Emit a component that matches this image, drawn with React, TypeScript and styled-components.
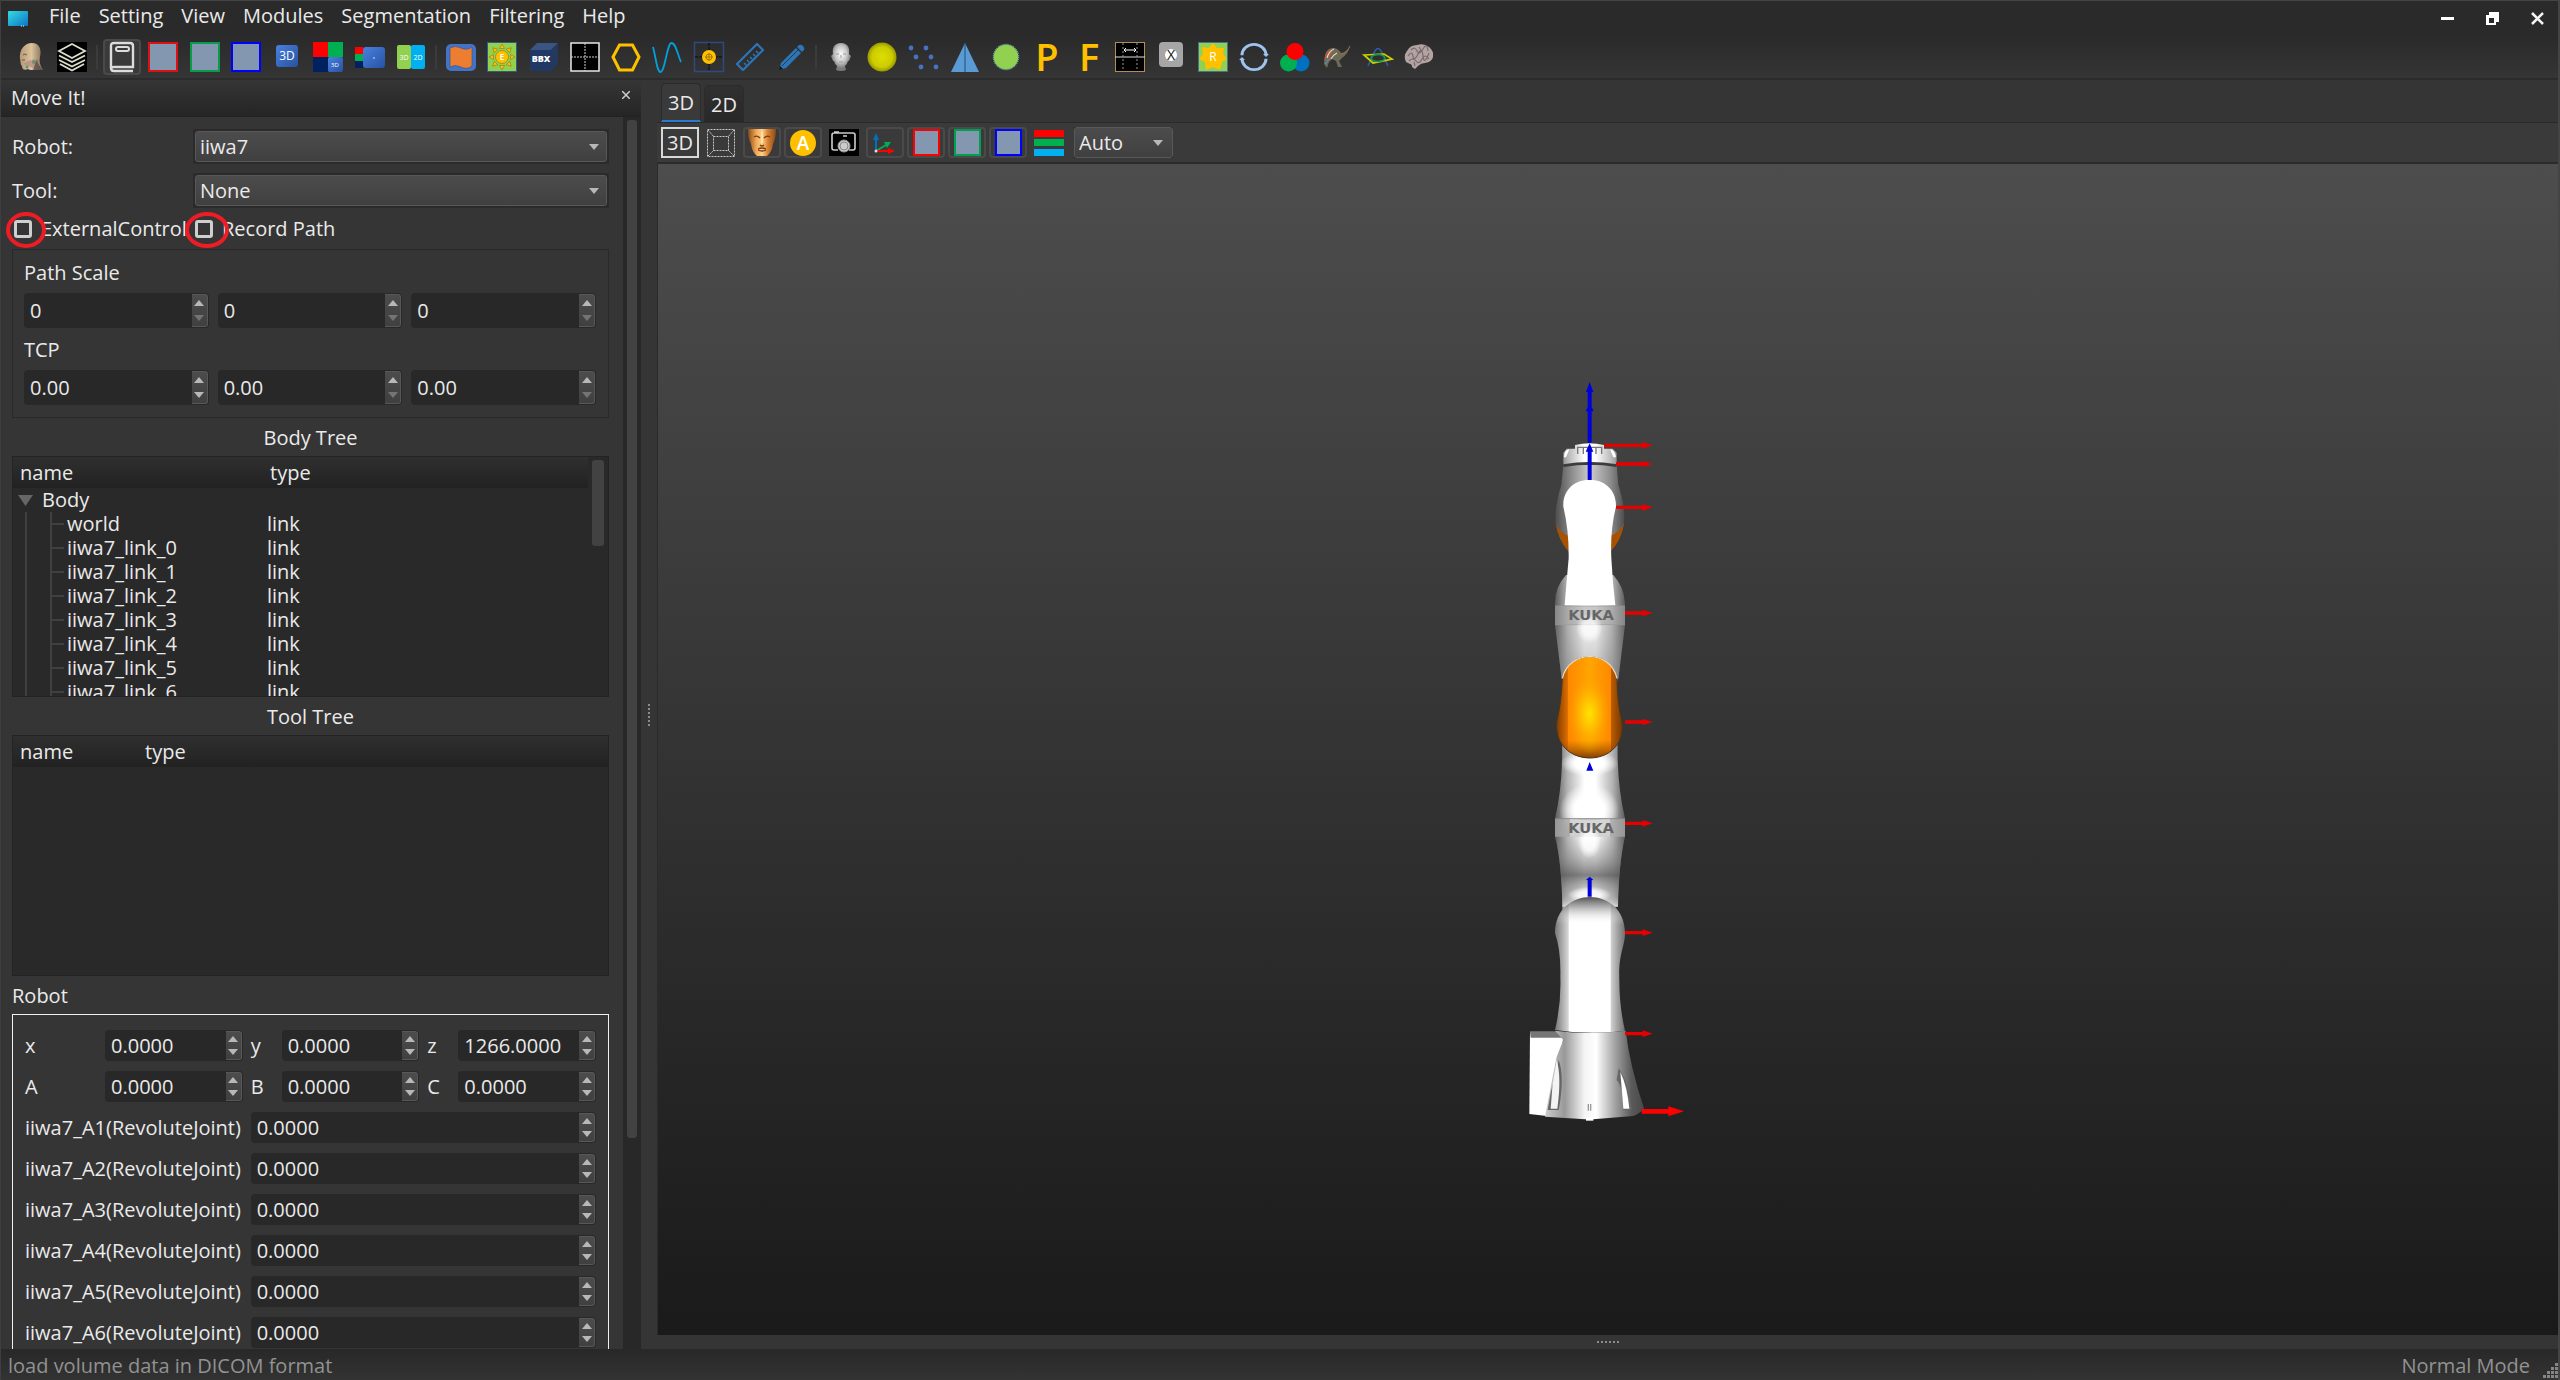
import React from 'react';
import styled, { createGlobalStyle, css } from 'styled-components';

const FONT = '"Open Sans", "Noto Sans", sans-serif';

const GlobalStyle = createGlobalStyle`
  *, *::before, *::after { box-sizing: border-box; }
  html, body { margin: 0; background: #353535; }
  body, button, input, select, table {
    font-family: ${FONT};
    font-size: 20px;
    line-height: 24px;
    color: #eaeaea;
  }
  button, input, select { margin: 0; padding: 0; border: 0; background: none; outline: none; }
`;

/* ---------- window shell ---------- */

const Window = styled.div`
  height: 100vh;
  display: flex;
  flex-direction: column;
  overflow: hidden;
  background: #353535;
  border-right: 2px solid #444;
  border-left: 1px solid #3e3e3e;
`;

const MenuBar = styled.header`
  height: 36px;
  flex: none;
  display: flex;
  align-items: stretch;
  padding-left: 6px;
  border-top: 1px solid #444;
  background: #2a2a2a;
`;

const AppIcon = styled.svg`
  width: 22px;
  height: 36px;
  margin-right: 11px;
`;

const MenuItem = styled.button`
  padding: 0 9px 6px;
`;

const WindowButtons = styled.div`
  display: flex;
  gap: 4px;
  margin-left: auto;
`;

const WindowButton = styled.button`
  width: 41px;
  display: grid;
  place-items: center;
`;

const ToolBar = styled.div`
  height: 44px;
  flex: none;
  display: flex;
  align-items: center;
  background: linear-gradient(#2a2a2a, #353535);
  border-bottom: 2px solid #2b2b2b;
  padding-left: 11px;
`;

const ToolGroup = styled.div<{ $width: number }>`
  width: ${p => p.$width}px;
  flex: none;
  display: flex;
  justify-content: space-between;
`;

const ToolSeparator = styled.span`
  width: 12px;
  flex: none;
  height: 24px;
  display: flex;
  justify-content: center;
  &::before { content: ''; width: 2px; background: #3b3b3b; }
`;

const framed = css`
  border: 2px solid #4a4a4a;
  border-radius: 4px;
  background: #3a3a3a;
`;

const ToolButton = styled.button<{ $framed?: boolean }>`
  width: 38px;
  height: 36px;
  flex: none;
  display: grid;
  place-items: center;
  ${p => p.$framed && framed}
  svg { display: block; overflow: visible; }
`;

const Main = styled.div`
  flex: 1;
  min-height: 0;
  display: flex;
`;

const StatusBar = styled.footer`
  height: 31px;
  flex: none;
  display: flex;
  align-items: center;
  justify-content: space-between;
  padding: 2px 0 0 7px;
  color: #929292;
  background: linear-gradient(#282828, #333);
`;

const StatusMode = styled.span`
  display: flex;
  align-items: flex-end;
  gap: 13px;
`;

/* ---------- dock ---------- */

const Dock = styled.aside`
  width: 640px;
  flex: none;
  display: flex;
  flex-direction: column;
`;

const DockTitle = styled.div`
  height: 37px;
  flex: none;
  display: flex;
  align-items: center;
  justify-content: space-between;
  padding: 0 9px 0 10px;
  background: linear-gradient(#353535, #252525);
  border-bottom: 1px solid #222;
`;

const DockClose = styled.button`
  width: 12px;
  height: 14px;
  display: grid;
  place-items: start center;
`;

const DockBody = styled.div`
  flex: 1;
  min-height: 0;
  display: flex;
`;

const DockContent = styled.div`
  flex: 1;
  overflow: hidden;
  padding: 12px 14px 0 11px;
`;

const ScrollTrack = styled.div`
  width: 18px;
  flex: none;
  padding: 3px 4px;
  background: #282828;
`;

const ScrollThumb = styled.div<{ $height: string }>`
  height: ${p => p.$height};
  border-radius: 3px;
  background: #424242;
`;

const Field = styled.div`
  display: grid;
  grid-template-columns: 181px 1fr;
  align-items: center;
  margin-bottom: 9px;
`;

const SelectFrame = styled.span`
  display: block;
  position: relative;
  padding: 2px;
  background: #2b2b2b;
  svg { position: absolute; right: 10px; top: 50%; margin-top: -3px; pointer-events: none; }
`;

const Select = styled.select`
  appearance: none;
  display: block;
  width: 100%;
  height: 31px;
  padding: 0 24px 0 4px;
  border: 1px solid #585858;
  border-radius: 3px;
  background: linear-gradient(#4c4c4c, #404040);
`;

const Checks = styled.div`
  display: flex;
  height: 41px;
  margin-top: -9px;
`;

const CheckItem = styled.label<{ $width: number }>`
  width: ${p => p.$width}px;
  position: relative;
  display: flex;
  align-items: center;
  gap: 9px;
  white-space: nowrap;
  padding-left: 2px;
`;

const CheckBox = styled.input`
  appearance: none;
  width: 18px;
  height: 18px;
  flex: none;
  border: 3px solid #cfcfcf;
  border-radius: 3px;
`;

const RedRing = styled.svg`
  position: absolute;
  left: -8px;
  top: 2px;
  pointer-events: none;
`;

const GroupBox = styled.fieldset`
  margin: 0;
  padding: 1px 12px 12px 11px;
  border: 1px solid #292929;
`;

const GroupLabel = styled.div`
  padding: 10px 0 8px;
  line-height: 24px;
`;

const Triple = styled.div`
  display: grid;
  grid-template-columns: repeat(3, 1fr);
  gap: 9px;
`;

const SpinFrame = styled.span<{ $height: number }>`
  display: flex;
  min-width: 0;
  height: ${p => p.$height}px;
  padding: 1px;
  border-radius: 4px;
  background: #282828;
`;

const SpinInput = styled.input`
  appearance: textfield;
  flex: 1;
  min-width: 0;
  padding-left: 5px;
  &::-webkit-inner-spin-button, &::-webkit-outer-spin-button { appearance: none; margin: 0; }
`;

const SpinButtons = styled.span`
  width: 16px;
  display: flex;
  flex-direction: column;
  border: 1px solid #585858;
  border-left: 0;
  border-radius: 0 3px 3px 0;
  background: linear-gradient(#4c4c4c, #404040);
`;

const SpinButton = styled.button`
  flex: 1;
  display: grid;
  place-items: center;
`;

const Heading = styled.div<{ $center?: boolean }>`
  height: 38px;
  line-height: 40px;
  text-align: ${p => (p.$center ? 'center' : 'left')};
`;

const TreeBox = styled.div`
  height: 241px;
  display: flex;
  overflow: hidden;
  border: 1px solid #232323;
  background: #292929;
`;

const TreeTable = styled.table<{ $first: number }>`
  flex: 1;
  display: block;
  overflow: hidden;
  border-collapse: collapse;
  thead, tbody { display: block; }
  thead { background: linear-gradient(#2f2f2f, #222); }
  tr { display: grid; grid-template-columns: ${p => p.$first}px 1fr; }
  th { padding: 4px 0 3px 7px; font-weight: 400; text-align: left; }
  td { padding: 0 0 0 4px; height: 24px; }
  td:first-child { display: flex; padding-left: 12px; }
`;

const Guide = styled.span<{ $branch?: boolean }>`
  width: ${p => (p.$branch ? 17 : 25)}px;
  display: flex;
  align-items: center;
  border-left: 2px solid #404040;
  &::after {
    content: '';
    width: 12px;
    height: ${p => (p.$branch ? 2 : 0)}px;
    background: #404040;
  }
`;

const RootCell = styled.span`
  display: flex;
  align-items: center;
  gap: 9px;
  margin-left: -7px;
`;

const TreeScroll = styled.div`
  width: 20px;
  padding: 3px 4px;
`;

const JointFrame = styled.div`
  display: grid;
  grid-template-columns: 72px 1fr 23px 1fr 23px 1fr;
  column-gap: 8px;
  row-gap: 10px;
  align-items: center;
  padding: 15px 12px;
  border: 1px solid #f0f0f0;
`;

const AxisLabel = styled.label<{ $wide?: boolean }>`
  grid-column: span ${p => (p.$wide ? 2 : 1)};
  white-space: nowrap;
`;

const JointValue = styled.div`
  grid-column: span 4;
`;

/* ---------- view area ---------- */

const Splitter = styled.div`
  width: 16px;
  flex: none;
  display: grid;
  place-items: center;
`;

const ViewArea = styled.section`
  flex: 1;
  min-width: 0;
  display: flex;
  flex-direction: column;
`;

const Tabs = styled.nav`
  height: 43px;
  flex: none;
  display: flex;
  align-items: flex-end;
  gap: 3px;
  padding-left: 4px;
  border-bottom: 1px solid #2a2a2a;
`;

const Tab = styled.button<{ $active?: boolean }>`
  width: 40px;
  height: ${p => (p.$active ? 39 : 37)}px;
  padding-top: 2px;
  border: 1px solid #2b2b2b;
  border-bottom: ${p => (p.$active ? '2px solid #2a7bd0' : '0')};
  border-radius: 5px 5px 0 0;
  background: ${p => (p.$active ? '#3a3a3a' : 'linear-gradient(#303030, #282828)')};
`;

const ViewTools = styled.div`
  height: 41px;
  flex: none;
  display: flex;
  align-items: center;
  gap: 3px;
  padding-left: 4px;
  background: #3a3a3a;
  border-bottom: 2px solid #2b2b2b;
  ${ToolButton} { height: 31px; }
`;

const ModeButton = styled(ToolButton)`
  border: 2px solid #d8d8d8;
`;

const ModeSelect = styled.span`
  width: 99px;
  margin-left: 3px;
  ${SelectFrame} { padding: 0; }
`;

const Viewport = styled.div`
  flex: 1;
  min-height: 0;
  display: flex;
  align-items: center;
  justify-content: center;
  border-left: 1px solid #2a2a2a;
  background: linear-gradient(#4d4d4d, #1a1a1a);
`;

const BottomHandle = styled.div`
  height: 14px;
  flex: none;
  display: grid;
  place-items: center;
`;

/* ---------- small glyphs ---------- */

const Arrow = ({ up, dim, size = 10 }: { up?: boolean; dim?: boolean; size?: number }) => (
  <svg width={size} height={size * 0.6} viewBox="0 0 10 6" aria-hidden="true">
    <path d={up ? 'M0 6L5 0L10 6Z' : 'M0 0H10L5 6Z'} fill={dim ? '#747474' : '#b8b8b8'} />
  </svg>
);

const Spin = ({ label, id, value, height = 31, dimUp, dimDown }: {
  label: string; id?: string; value: string; height?: number; dimUp?: boolean; dimDown?: boolean;
}) => (
  <SpinFrame $height={height}>
    <SpinInput id={id} type="number" step="any" defaultValue={value} aria-label={label} />
    <SpinButtons>
      <SpinButton aria-label={`${label} up`}><Arrow up dim={dimUp} size={10} /></SpinButton>
      <SpinButton aria-label={`${label} down`}><Arrow dim={dimDown} size={10} /></SpinButton>
    </SpinButtons>
  </SpinFrame>
);

const Icon = ({ children }: { children: React.ReactNode }) => (
  <svg width="30" height="30" viewBox="0 0 30 30" fill="none" aria-hidden="true">{children}</svg>
);

const Label = ({ x = 15, y, size, fill = '#fff', weight = 400, children }: {
  x?: number; y: number; size: number; fill?: string; weight?: number; children: string;
}) => (
  <text x={x} y={y} fontSize={size} fill={fill} fontWeight={weight} textAnchor="middle" fontFamily={FONT}>{children}</text>
);

const Plane = ({ color }: { color: string }) => (
  <Icon><rect x="1" y="1" width="28" height="28" fill="#8497b0" stroke={color} strokeWidth="2" /></Icon>
);

const SmallPlane = ({ color }: { color: string }) => (
  <svg width="27" height="27" viewBox="0 0 27 27" aria-hidden="true">
    <rect x="1" y="1" width="25" height="25" fill="#8497b0" stroke={color} strokeWidth="2" />
  </svg>
);

const Defs = () => (
  <svg width="0" height="0" style={{ position: 'absolute' }} aria-hidden="true">
    <defs>
      <linearGradient id="blueCube" x1="0" y1="0" x2="1" y2="1">
        <stop offset="0" stopColor="#4a80dd" /><stop offset="1" stopColor="#2553a4" />
      </linearGradient>
      <linearGradient id="skin" x1="0" y1="0" x2="1" y2="0">
        <stop offset="0" stopColor="#b59a77" /><stop offset=".5" stopColor="#dcc39b" /><stop offset="1" stopColor="#7d6a55" />
      </linearGradient>
      <radialGradient id="mannequin" cx=".5" cy=".4">
        <stop offset="0" stopColor="#fff" /><stop offset=".6" stopColor="#c4c4c4" /><stop offset="1" stopColor="#7a7a7a" />
      </radialGradient>
      <radialGradient id="olive">
        <stop offset="0" stopColor="#dede00" /><stop offset=".7" stopColor="#cccc00" /><stop offset="1" stopColor="#989800" />
      </radialGradient>
      <linearGradient id="bronze" x1="0" y1="0" x2="1" y2="0">
        <stop offset="0" stopColor="#8b4913" /><stop offset=".3" stopColor="#f3a957" /><stop offset=".5" stopColor="#ffd08a" />
        <stop offset=".7" stopColor="#d98435" /><stop offset="1" stopColor="#8b4913" />
      </linearGradient>
    </defs>
  </svg>
);

const HeadIcon = () => (
  <Icon>
    <path d="M4 17C3 7 9 1 16 1C23 1 26 7 24 15C23 19 24 24 27 28H14L12 27C8 29 6 27 6 24C4 22 5 20 4 17Z" fill="url(#skin)" />
    <path d="M7 22L12 19L19 17L21 22L18 26L12 24Z" fill="#b17f83" opacity=".6" />
    <circle cx="18" cy="20" r="2" fill="#718e6b" /><circle cx="11" cy="25" r="1.4" fill="#4f9a74" />
    <path d="M7 13Q9 11 11 13M6 18L9 18" stroke="#705438" />
    <path d="M21 17Q22 24 27 28H17Z" fill="#4a433e" opacity=".7" />
  </Icon>
);
const LayersIcon = () => (
  <Icon>
    <rect width="30" height="30" fill="#000" />
    <path d="M15 3L28 10L15 17L2 10ZM2 14.500L15 21L28 14.500M2 19L15 25.500L28 19M3 23L15 29.500L27 23" stroke="#dedecc" strokeWidth="1.800" transform="translate(0 -1)" />
  </Icon>
);
const BookIcon = () => (
  <Icon>
    <path d="M26 29H7Q4 29 4 26V4Q4 1 7 1H23Q26 1 26 4V25H7Q4 25 4 27" stroke="#dcdcdc" strokeWidth="2.400" />
    <rect x="9" y="5" width="13" height="4" rx="2" stroke="#dcdcdc" strokeWidth="2" />
  </Icon>
);
const Cube3DIcon = () => (
  <Icon><rect x="4" y="3" width="22" height="22" rx="3" fill="url(#blueCube)" /><Label y={18} size={12}>3D</Label></Icon>
);
const QuadIcon = () => (
  <Icon>
    <path d="M0 0H15V15H0Z" fill="#f00" /><path d="M15 0H30V15H15Z" fill="#00b050" /><path d="M0 15H15V30H0Z" fill="#002060" />
    <rect x="15" y="15" width="15" height="15" rx="2" fill="url(#blueCube)" /><Label x={22} y={25} size={6}>3D</Label>
  </Icon>
);
const StackIcon = () => (
  <Icon>
    <path d="M0 5H8V12H0Z" fill="#f00" /><path d="M0 12H8V19H0Z" fill="#00b050" /><path d="M0 19H8V26H0Z" fill="#002060" />
    <rect x="8" y="5" width="22" height="21" rx="3" fill="url(#blueCube)" /><circle cx="19" cy="16" r="1" fill="#9db8e6" />
  </Icon>
);
const PairIcon = () => (
  <Icon>
    <rect x="1" y="3" width="14" height="24" rx="2" fill="#92d050" /><rect x="15" y="3" width="14" height="24" rx="2" fill="#00b0f0" />
    <Label x={8} y={18} size={7}>3D</Label><Label x={22} y={18} size={7}>2D</Label>
  </Icon>
);
const FlagIcon = () => (
  <Icon>
    <rect x="0" y="2" width="30" height="27" rx="5" fill="#4472c4" />
    <path d="M4 6Q9 3 15 6Q21 9 26 5V24Q21 28 15 25Q9 22 4 25Z" fill="#ed7d31" stroke="#2f528f" strokeWidth=".600" />
  </Icon>
);
const SunIcon = () => (
  <Icon>
    <rect x=".500" y=".500" width="29" height="29" fill="#92d050" stroke="#2f5b87" />
    {[0, 45, 90, 135, 180, 225, 270, 315].map(a => (
      <path key={a} d="M12.500 6.500L15 2L17.500 6.500Z" fill="#ffc000" stroke="#7f6a10" strokeWidth=".500" transform={`rotate(${a} 15 15)`} />
    ))}
    <circle cx="15" cy="15" r="6.500" fill="#ffc000" stroke="#7f6a10" strokeWidth=".500" /><Label y={18} size={8} weight={600}>E</Label>
  </Icon>
);
const BoxIcon = () => (
  <Icon>
    <path d="M1 8L8 1H29L22 8Z" fill="#3a5584" /><path d="M22 8L29 1V22L22 29Z" fill="#23395f" /><path d="M1 8H22V29H1Z" fill="#203864" />
    <Label x={12} y={20} size={9} weight={800}>BBX</Label>
  </Icon>
);
const GridIcon = () => (
  <Icon><rect x="1" y="1" width="28" height="28" fill="#000" stroke="#e8e8e8" strokeWidth="1.500" /><path d="M15 1V29M1 15H29" stroke="#d0d0d0" strokeDasharray="2 1" /></Icon>
);
const HexIcon = () => (
  <Icon><path d="M2 15L8.500 3H21.500L28 15L21.500 28H8.500Z" stroke="#ffc000" strokeWidth="3" /></Icon>
);
const WaveIcon = () => (
  <Icon><path d="M1 5C4 16 5 30 8.500 30C13 30 15 1 19.500 1C24 1 26 14 29 20" stroke="#00a0d8" strokeWidth="1.800" /></Icon>
);
const TargetIcon = () => (
  <Icon>
    <rect x=".500" y=".500" width="29" height="29" stroke="#2f4a80" strokeWidth="1.500" />
    <path d="M15 1V29M1 15H29" stroke="#151515" strokeWidth="1.500" strokeDasharray="3 1" /><circle cx="15" cy="15" r="7" fill="#ffc000" />
    <circle cx="15" cy="15" r="3" stroke="#a07800" /><path d="M15 11V19M11 15H19" stroke="#a07800" />
  </Icon>
);
const RulerIcon = () => (
  <Icon>
    <path d="M2 22L22 2L28 8L8 28Z" stroke="#2e75b6" strokeWidth="2.200" strokeLinejoin="round" />
    <path d="M9 21L11 23M12 18L14 20M15 15L17 17M18 12L20 14M21 9L23 11" stroke="#2e75b6" strokeWidth="1.500" />
  </Icon>
);
const PencilIcon = () => (
  <Icon>
    <path d="M3 28L5 21L20 6L25 11L10 26Z" fill="#2e75b6" /><path d="M21 5L23 3Q25 2 27 4Q29 6 28 8L26 10Z" fill="#2e75b6" />
    <path d="M6 24L22 8" stroke="#173d61" /><path d="M3 28L4 24L7 27Z" fill="#111" />
  </Icon>
);
const MannequinIcon = () => (
  <Icon>
    <path d="M15 1C22 1 24 6 23 12L25 14L23 19H22Q21 23 19 24L20 28Q15 30 10 28L11 24Q9 23 8 19H7L5 14L7 12C6 6 8 1 15 1Z" fill="url(#mannequin)" />
    <path d="M10 12H13M17 12H20M13 20H17M15 13V16" stroke="#999" />
  </Icon>
);
const SphereIcon = () => <Icon><circle cx="15" cy="15" r="14.500" fill="url(#olive)" /></Icon>;
const PointsIcon = () => (
  <Icon>{[[2, 6], [17, 6], [7, 15], [22, 15], [12, 25], [27, 25]].map(([x, y]) => (
    <circle key={x} cx={x} cy={y} r="2.400" fill="#4472c4" />
  ))}</Icon>
);
const PyramidIcon = () => <Icon><path d="M15 1L29 30H1Z" fill="#5b9bd5" /><path d="M15 1V30" stroke="#1f4e79" /></Icon>;
const BlobIcon = () => (
  <Icon><circle cx="15" cy="15" r="12.500" fill="#92d050" stroke="#69a8a0" strokeWidth="1.500" strokeDasharray="1 1" /></Icon>
);
const LetterIcon = ({ letter }: { letter: string }) => <Icon><Label y={29} size={38} weight={600} fill="#ffc000">{letter}</Label></Icon>;
const MeasureIcon = () => (
  <Icon>
    <rect x=".500" y=".500" width="29" height="29" fill="#000" stroke="#b08d57" />
    <path d="M0 15H30" stroke="#ddd" /><path d="M8 1V29M22 1V29" stroke="#999" strokeDasharray="2 2" />
    <path d="M9 8H21M11 6L9 8L11 10M19 6L21 8L19 10" stroke="#fff" />
  </Icon>
);
const KeyIcon = () => (
  <Icon><rect x="3" y="0" width="24" height="25" rx="4" fill="#a6a6a6" /><circle cx="15" cy="13" r="6" fill="#fff" /><Label y={18} size={14} fill="#111">X</Label></Icon>
);
const StarIcon = () => (
  <Icon>
    <rect x=".500" y=".500" width="29" height="29" fill="#92d050" stroke="#41719c" />
    <path d="M15 1L19 6L26 6L25 12L29 17L24 20L22 28L15 25L8 28L7 20L1 17L5 12L4 5L11 6Z" fill="#ffc000" />
    <Label y={19} size={12}>R</Label>
  </Icon>
);
const RingIcon = () => (
  <Icon>
    <path d="M3 13A12 12 0 0 1 27 13M27 17A12 12 0 0 1 3 17" stroke="#9dc3ee" strokeWidth="3" transform="translate(0 1.5) scale(1 .9)" />
    <path d="M24 12H30L27 15ZM0 18H6L3 15Z" fill="#9dc3ee" />
  </Icon>
);
const RgbIcon = () => (
  <Icon><circle cx="21" cy="21" r="8.500" fill="#0070c0" /><circle cx="8.500" cy="21" r="8.500" fill="#00b050" /><circle cx="15" cy="9.500" r="8.500" fill="#f00" /></Icon>
);
const DinoIcon = () => (
  <Icon>
    <path d="M3 22L4 13Q6 6 12 6Q17 6 20 11Q25 11 29 4Q27 12 21 16L18 19L21 25H17L15 19L11 17L8 20L6 26Z" fill="#6d6a58" />
    <path d="M4 19Q5 10 10 8M8 19Q8 12 12 9" stroke="#b8553a" strokeWidth="1.500" />
    <path d="M6 16Q8 9 13 7M10 17Q12 13 16 11" stroke="#d7dccb" strokeWidth="1.200" /><path d="M4 22L8 17" stroke="#4d8ca6" strokeWidth="1.500" />
    <path d="M20 12Q25 12 29 4" stroke="#a06a45" />
  </Icon>
);
const OrbitIcon = () => (
  <Icon>
    <path d="M5 24L11 11Q15 2 19 11L25 24" stroke="#2c5cae" strokeWidth="1.600" />
    <path d="M1 13L21 12L29 17L10 21Z" stroke="#d0d000" strokeWidth="1.700" /><ellipse cx="15" cy="16" rx="7" ry="3.500" stroke="#159a48" strokeWidth="1.500" />
  </Icon>
);
const BrainIcon = () => (
  <Icon>
    <path d="M2 20Q-1 14 3 9Q6 3 13 3Q20 1 25 5Q30 9 29 15Q28 20 21 21Q17 21 14 24L11 27L8 25Q8 22 6 22Z" fill="#b3a3a3" />
    <path d="M4 14Q8 8 9 14T14 12T19 14T25 11M7 8Q11 4 13 9T19 7T24 9M5 19Q9 15 12 19T18 17T25 17M15 5L17 8M10 20L11 24" stroke="#7b6a6c" strokeWidth="1.200" />
  </Icon>
);

const FrameIcon = () => (
  <svg width="28" height="28" viewBox="0 0 28 28" fill="none" stroke="#c8c8c8" strokeDasharray="2 1" aria-hidden="true">
    <rect x=".500" y=".500" width="27" height="27" /><rect x="6.500" y="7.500" width="15" height="14" /><path d="M1 1L7 8M27 1L21 8M1 27L7 21M27 27L21 21" />
  </svg>
);
const FaceIcon = () => (
  <svg width="28" height="27" viewBox="0 0 28 27" fill="none" aria-hidden="true">
    <path d="M0 0H28Q28 9 25 15Q24 23 19 27H9Q4 23 3 15Q0 9 0 0Z" fill="url(#bronze)" />
    <path d="M6 8Q9 6 12 9M16 9Q19 6 22 8M10 20Q14 18 18 20M10 21Q14 23 18 21M12 16Q14 18 16 16" stroke="#7a3d0c" strokeWidth="1.300" />
    <path d="M14 3V14" stroke="#ffe6b8" strokeWidth="1.500" />
  </svg>
);
const AutoIcon = () => (
  <svg width="26" height="26" viewBox="0 0 26 26" aria-hidden="true"><circle cx="13" cy="13" r="13" fill="#ffc000" /><Label x={13} y={20} size={19} weight={600}>A</Label></svg>
);
const CameraIcon = () => (
  <svg width="30" height="27" viewBox="0 0 30 27" fill="none" aria-hidden="true">
    <rect width="30" height="27" fill="#000" />
    <path d="M9 21H5Q3 21 3 19V6Q3 4 5 4H24Q26 4 26 6V19Q26 21 24 21H20M5 3H10M14 7H18" stroke="#ccc" strokeWidth="1.600" />
    <circle cx="15" cy="17" r="6" fill="#ccc" stroke="#999" /><circle cx="15" cy="17" r="4" stroke="#888" />
  </svg>
);
const AxesIcon = () => (
  <svg width="26" height="26" viewBox="0 0 26 26" fill="none" aria-hidden="true">
    <path d="M4 21V9" stroke="#0070c0" strokeWidth="2" /><path d="M1 10L4 3L7 10Z" fill="#0070c0" />
    <path d="M4 21L14 15" stroke="#00b050" strokeWidth="2" /><path d="M12 12L19 12L15 18Z" fill="#00b050" />
    <path d="M4 21H17" stroke="#f00" strokeWidth="2" /><path d="M16 18L23 21L16 24Z" fill="#f00" /><circle cx="4" cy="21" r="1.500" fill="#ddd" />
  </svg>
);
const StripesIcon = () => (
  <svg width="30" height="26" viewBox="0 0 30 26" aria-hidden="true">
    <path d="M0 0H30V7H0Z" fill="#f00" /><path d="M0 9H30V16H0Z" fill="#00b050" /><path d="M0 19H30V26H0Z" fill="#00b0f0" />
  </svg>
);

/* ---------- robot drawing ---------- */

const Arrows = () => (
  <g fill="#e60000">
    {[[312, 226], [348, 282], [348, 412], [375, 729], [375, 1056], [375, 1360], [375, 1688], [375, 1991]].map(([x, y]) => (
      <path key={y} d={`M${x} ${y - 5}H428V${y - 10}L458 ${y}L428 ${y + 10}V${y + 5}H${x}Z`} />
    ))}
    <path d="M425 2217H505V2209L552 2224L505 2239V2231H425Z" fill="#f00" />
  </g>
);

const COVER = 'M170 1056C158 1200 382 1200 366 1056Q352 1000 351 925C330 838 208 838 187 925Q184 1000 170 1056Z';

const Robot = () => (
  <svg width="216" height="759" viewBox="0 0 648 2277" aria-label="iiwa7 robot" role="img">
    <defs>
      <linearGradient id="metal" x1="165" x2="375" y1="0" y2="0" gradientUnits="userSpaceOnUse">
        <stop offset="0" stopColor="#5c5c5c" /><stop offset=".18" stopColor="#b4b4b4" /><stop offset=".42" stopColor="#fff" />
        <stop offset=".58" stopColor="#fff" /><stop offset=".82" stopColor="#b4b4b4" /><stop offset="1" stopColor="#5c5c5c" />
      </linearGradient>
      <linearGradient id="bright" x1="165" x2="375" y1="0" y2="0" gradientUnits="userSpaceOnUse">
        <stop offset="0" stopColor="#777" /><stop offset=".19" stopColor="#d6d6d6" /><stop offset=".2" stopColor="#fff" />
        <stop offset=".79" stopColor="#fff" /><stop offset=".8" stopColor="#d0d0d0" /><stop offset="1" stopColor="#707070" />
      </linearGradient>
      <linearGradient id="shoulder" x1="0" x2="0" y1="0" y2="1">
        <stop offset="0" stopColor="#333" stopOpacity=".85" /><stop offset=".07" stopColor="#777" stopOpacity=".6" /><stop offset=".2" stopColor="#fff" stopOpacity="0" />
      </linearGradient>
      <linearGradient id="waist" x1="0" x2="0" y1="0" y2="1">
        <stop offset="0" stopColor="#888" stopOpacity="0" /><stop offset=".3" stopColor="#777" stopOpacity=".45" />
        <stop offset=".55" stopColor="#555" stopOpacity=".75" /><stop offset=".85" stopColor="#999" stopOpacity=".3" /><stop offset="1" stopColor="#fff" stopOpacity=".6" />
      </linearGradient>
      <linearGradient id="upperShade" x1="0" x2="0" y1="0" y2="1">
        <stop offset="0" stopColor="#888" stopOpacity=".15" /><stop offset=".6" stopColor="#777" stopOpacity=".45" />
      </linearGradient>
      <linearGradient id="orangeSide" x1="168" x2="370" y1="0" y2="0" gradientUnits="userSpaceOnUse">
        <stop offset="0" stopColor="#7c3900" /><stop offset=".17" stopColor="#da6d00" /><stop offset=".18" stopColor="#ff8800" />
        <stop offset=".5" stopColor="#ffa500" /><stop offset=".81" stopColor="#ff8800" /><stop offset=".82" stopColor="#bb5d00" /><stop offset="1" stopColor="#703300" />
      </linearGradient>
      <radialGradient id="glow"><stop offset="0" stopColor="#ffe500" /><stop offset=".4" stopColor="#ffc400" stopOpacity=".8" /><stop offset="1" stopColor="#ff9800" stopOpacity="0" /></radialGradient>
      <linearGradient id="orangeBottom" x1="0" x2="0" y1="0" y2="1"><stop offset=".82" stopColor="#9a4a00" stopOpacity="0" /><stop offset="1" stopColor="#753500" stopOpacity=".9" /></linearGradient>
      <linearGradient id="wrist" x1="165" x2="375" y1="0" y2="0" gradientUnits="userSpaceOnUse">
        <stop offset="0" stopColor="#4c4c4c" /><stop offset=".25" stopColor="#909090" /><stop offset=".5" stopColor="#ccc" /><stop offset=".8" stopColor="#8a8a8a" /><stop offset="1" stopColor="#4a4a4a" />
      </linearGradient>
      <linearGradient id="base" x1="135" x2="430" y1="0" y2="0" gradientUnits="userSpaceOnUse">
        <stop offset="0" stopColor="#ccc" /><stop offset=".2" stopColor="#999" /><stop offset=".4" stopColor="#f4f4f4" />
        <stop offset=".52" stopColor="#fff" /><stop offset=".7" stopColor="#a8a8a8" /><stop offset=".88" stopColor="#5a5a5a" /><stop offset="1" stopColor="#4a4a4a" />
      </linearGradient>
      <radialGradient id="flare"><stop offset="0" stopColor="#fff" /><stop offset=".5" stopColor="#fff" /><stop offset="1" stopColor="#fff" stopOpacity="0" /></radialGradient>
    </defs>

    {/* wrist */}
    <path d="M190 285H350L355 345Q377 410 372 465Q360 515 330 545H207Q175 510 167 460Q163 410 184 345Z" fill="url(#wrist)" />
    <path d="M167 458Q175 485 207 498V545Q175 512 167 458ZM372 458Q362 485 330 498V545Q365 512 372 458Z" fill="#a85200" />
    <path d="M190 285V248L200 236H225V225Q268 214 312 225V236H338L350 248V285Q270 270 190 285Z" fill="url(#metal)" />
    <path d="M192 262Q192 240 208 238L198 262ZM348 262Q345 240 330 238L340 262Z" fill="#fff" />
    <path d="M233 252V232H250V252M245 232H295M288 252V232H305V252" fill="none" stroke="#777" strokeWidth="4" />
    <path d="M190 287Q270 273 350 287" fill="none" stroke="#3c3c3c" strokeWidth="8" />

    {/* upper arm */}
    <path d="M198 615Q165 650 165 700V765L185 925L210 1000H330L355 925L375 765V700Q372 650 340 615Z" fill="url(#metal)" />
    <path d="M165 765H375L355 925L330 1000H210L185 925Z" fill="url(#upperShade)" />
    <path d="M190 410C185 302 352 302 348 410Q330 480 334 565Q338 640 346 706H194Q200 630 206 565Q207 480 190 410Z" fill="#fff" />
    <path d="M165 708H375V764H165Z" fill="#a4a4a4" fillOpacity=".6" />
    <path d="M165 708H375M165 764H375" stroke="#999" strokeWidth="2" />
    <ellipse cx="268" cy="775" rx="40" ry="45" fill="url(#flare)" opacity=".7" />

    {/* lower arm */}
    <path d="M186 1110H353Q350 1240 375 1345V1400Q356 1480 354 1610L187 1620Q186 1480 165 1400V1345Q190 1240 186 1110Z" fill="url(#metal)" />
    <ellipse cx="268" cy="1180" rx="86" ry="40" fill="url(#flare)" /><ellipse cx="268" cy="1320" rx="90" ry="80" fill="url(#flare)" />
    <path d="M165 1345H375V1400H165Z" fill="#aaa" fillOpacity=".75" />
    <path d="M210 1345Q268 1354 330 1345V1400H210Z" fill="#eee" fillOpacity=".5" />
    <path d="M165 1400H375Q356 1480 354 1610H187Q186 1480 165 1400Z" fill="url(#waist)" />
    <path d="M165 1346H375" stroke="#777" strokeWidth="2" />
    <ellipse cx="268" cy="1415" rx="34" ry="50" fill="url(#flare)" opacity=".8" />
    <ellipse cx="268" cy="1575" rx="66" ry="25" fill="url(#flare)" opacity=".8" />

    {/* elbow cover */}
    <path d={COVER} fill="url(#orangeSide)" />
    <path d={COVER} fill="url(#orangeBottom)" stroke="#4a3520" strokeWidth="3" />
    <path d="M187 925C208 838 330 838 351 925" fill="none" stroke="#f0dcc0" strokeWidth="4" />
    <ellipse cx="268" cy="1030" rx="66" ry="120" fill="url(#glow)" />

    {/* shoulder */}
    <path d="M165 1690C165 1545 375 1545 375 1690C375 1730 355 1750 358 1830Q358 1910 375 1982Q268 1996 165 1980Q184 1900 181 1820Q183 1740 165 1690Z" fill="url(#bright)" />
    <path d="M165 1690C165 1545 375 1545 375 1690C375 1730 355 1750 358 1830Q358 1910 375 1982Q268 1996 165 1980Q184 1900 181 1820Q183 1740 165 1690Z" fill="url(#shoulder)" />

    {/* base */}
    <path d="M90 1985H170L190 2000L160 2240L88 2232Z" fill="#fff" />
    <path d="M90 1985H170L190 2003H92Z" fill="#777" />
    <path d="M165 1982Q268 1996 377 1982Q390 2090 432 2215Q425 2228 400 2238L280 2248H255L135 2240L170 2060L190 2010Z" fill="url(#base)" />
    <path d="M176 2070Q195 2120 176 2220H143L152 2170Z" fill="#666" /><path d="M170 2070Q185 2120 172 2216H152L158 2140Z" fill="#f4f4f4" />
    <path d="M356 2095Q388 2140 395 2220H370Q370 2150 350 2130Z" fill="#666" /><path d="M361 2105Q382 2150 388 2216H370Z" fill="#fff" />
    <path d="M265 2202V2222M272 2202V2222" stroke="#999" strokeWidth="4" /><path d="M258 2242H280V2252H258Z" fill="#fff" />

    <g fontFamily='"DejaVu Sans", sans-serif' fontWeight="700" fontSize="44" fill="#666" textAnchor="middle">
      <text x="273" y="750">KUKA</text><text x="273" y="1390">KUKA</text>
    </g>

    <Arrows />
    <g fill="#0000dc">
      <path d="M263 218V66H258L269 36L280 66H275V218ZM257 124L269 98L281 124ZM263 330V245H257L269 220L280 245H275V330Z" />
      <path d="M259 1202L269 1176L280 1202ZM263 1580V1530H258L269 1520L280 1530H275V1580Z" />
    </g>
  </svg>
);

/* ---------- page ---------- */

const menus = ['File', 'Setting', 'View', 'Modules', 'Segmentation', 'Filtering', 'Help'];

const toolGroups: { width: number; icons: [string, React.ReactNode][] }[] = [
  { width: 79, icons: [['Volume', <HeadIcon />], ['Layers', <LayersIcon />]] },
  {
    width: 327,
    icons: [['Book', <BookIcon />], ['Red plane', <Plane color="#d11" />], ['Green plane', <Plane color="#0a9a4c" />], ['Blue plane', <Plane color="#00f" />],
      ['3D', <Cube3DIcon />], ['Four views', <QuadIcon />], ['Stacked views', <StackIcon />], ['Side by side', <PairIcon />]],
  },
  {
    width: 368,
    icons: [['Surface', <FlagIcon />], ['Light', <SunIcon />], ['Bounding box', <BoxIcon />], ['Grid', <GridIcon />], ['Polygon', <HexIcon />],
      ['Curve', <WaveIcon />], ['Target', <TargetIcon />], ['Ruler', <RulerIcon />], ['Pencil', <PencilIcon />]],
  },
  {
    width: 616,
    icons: [['Mannequin', <MannequinIcon />], ['Sphere', <SphereIcon />], ['Points', <PointsIcon />], ['Pyramid', <PyramidIcon />], ['Blob', <BlobIcon />],
      ['P', <LetterIcon letter="P" />], ['F', <LetterIcon letter="F" />], ['Measure', <MeasureIcon />], ['X', <KeyIcon />], ['Register', <StarIcon />],
      ['Rotate', <RingIcon />], ['Colors', <RgbIcon />], ['Dinosaur', <DinoIcon />], ['Orbit', <OrbitIcon />], ['Brain', <BrainIcon />]],
  },
];

const links = ['world', ...[0, 1, 2, 3, 4, 5, 6].map(i => `iiwa7_link_${i}`)];
const pose = [['x', '0.0000'], ['y', '0.0000'], ['z', '1266.0000'], ['A', '0.0000'], ['B', '0.0000'], ['C', '0.0000']];
const joints = [1, 2, 3, 4, 5, 6].map(i => `iiwa7_A${i}(RevoluteJoint)`);

const Ring = ({ rx }: { rx: number }) => (
  <RedRing width="46" height="40" viewBox="0 0 46 40" fill="none" aria-hidden="true">
    <ellipse cx="22" cy="20" rx={rx} ry="16" stroke="#ee1c24" strokeWidth="4" />
  </RedRing>
);

const Dots = ({ vertical }: { vertical?: boolean }) => (
  <svg width={vertical ? 3 : 22} height={vertical ? 22 : 3} aria-hidden="true">
    {[0, 4, 8, 12, 16, 20].map(n => <rect key={n} x={vertical ? 0 : n} y={vertical ? n : 0} width="2" height="2" fill="#8c8c8c" />)}
  </svg>
);

export default function App() {
  return (
    <Window>
      <GlobalStyle />
      <Defs />
      <MenuBar>
        <AppIcon viewBox="0 0 22 36" aria-hidden="true">
          <defs><linearGradient id="app" x1="0" y1="0" x2="1" y2="1"><stop offset="0" stopColor="#35dbe0" /><stop offset="1" stopColor="#0d74c5" /></linearGradient></defs>
          <rect x="1" y="10" width="20" height="15" rx="1" fill="url(#app)" /><path d="M14 25H18" stroke="#eee" strokeDasharray="1 1" />
        </AppIcon>
        {menus.map(m => <MenuItem key={m}>{m}</MenuItem>)}
        <WindowButtons>
          <WindowButton aria-label="Minimize"><svg width="13" height="13"><path d="M0 6.500H13" stroke="#fff" strokeWidth="3" /></svg></WindowButton>
          <WindowButton aria-label="Restore">
            <svg width="13" height="13"><path d="M3 0H13V10H10V13H0V3H3Z" fill="#fff" /><path d="M3 6H8V11H3Z" fill="#2a2a2a" /></svg>
          </WindowButton>
          <WindowButton aria-label="Close"><svg width="13" height="13"><path d="M1 1L12 12M12 1L1 12" stroke="#f4f4f4" strokeWidth="2.500" /></svg></WindowButton>
        </WindowButtons>
      </MenuBar>

      <ToolBar>
        {toolGroups.map((g, i) => (
          <React.Fragment key={g.width}>
            {i > 0 && <ToolSeparator />}
            <ToolGroup $width={g.width}>
              {g.icons.map(([name, icon]) => <ToolButton key={name} aria-label={name} $framed={name === 'Book'}>{icon}</ToolButton>)}
            </ToolGroup>
          </React.Fragment>
        ))}
      </ToolBar>

      <Main>
        <Dock>
          <DockTitle>
            Move It!
            <DockClose aria-label="Close panel"><svg width="8" height="8"><path d="M0 0L8 8M8 0L0 8" stroke="#ccc" strokeWidth="1.500" /></svg></DockClose>
          </DockTitle>
          <DockBody>
            <DockContent>
              <Field>
                <label htmlFor="robot">Robot:</label>
                <SelectFrame><Select id="robot"><option>iiwa7</option></Select><Arrow /></SelectFrame>
              </Field>
              <Field>
                <label htmlFor="tool">Tool:</label>
                <SelectFrame><Select id="tool"><option>None</option></Select><Arrow /></SelectFrame>
              </Field>
              <Checks>
                <CheckItem $width={181}><CheckBox type="checkbox" />ExternalControl<Ring rx={18} /></CheckItem>
                <CheckItem $width={181}><CheckBox type="checkbox" />Record Path<Ring rx={20} /></CheckItem>
              </Checks>
              <GroupBox>
                <GroupLabel>Path Scale</GroupLabel>
                <Triple>{[1, 2, 3].map(n => <Spin key={n} label={`Path scale ${n}`} value="0" height={35} dimDown />)}</Triple>
                <GroupLabel>TCP</GroupLabel>
                <Triple>{[1, 2, 3].map(n => <Spin key={n} label={`TCP ${n}`} value="0.00" height={35} dimDown={n > 1} />)}</Triple>
              </GroupBox>

              <Heading $center>Body Tree</Heading>
              <TreeBox>
                <TreeTable $first={250}>
                  <thead><tr><th>name</th><th>type</th></tr></thead>
                  <tbody>
                    <tr>
                      <td><RootCell><svg width="15" height="11" aria-hidden="true"><path d="M0 0H15L7.500 11Z" fill="#666" /></svg>Body</RootCell></td>
                      <td />
                    </tr>
                    {links.map(l => <tr key={l}><td><Guide /><Guide $branch />{l}</td><td>link</td></tr>)}
                  </tbody>
                </TreeTable>
                <TreeScroll><ScrollThumb $height="86px" /></TreeScroll>
              </TreeBox>

              <Heading $center>Tool Tree</Heading>
              <TreeBox>
                <TreeTable $first={125}>
                  <thead><tr><th>name</th><th>type</th></tr></thead>
                </TreeTable>
              </TreeBox>

              <Heading>Robot</Heading>
              <JointFrame>
                {pose.map(([axis, value]) => (
                  <React.Fragment key={axis}>
                    <AxisLabel htmlFor={`axis-${axis}`}>{axis}</AxisLabel>
                    <Spin id={`axis-${axis}`} label={axis} value={value} />
                  </React.Fragment>
                ))}
                {joints.map(j => (
                  <React.Fragment key={j}>
                    <AxisLabel $wide htmlFor={j}>{j}</AxisLabel>
                    <JointValue><Spin id={j} label={j} value="0.0000" /></JointValue>
                  </React.Fragment>
                ))}
              </JointFrame>
            </DockContent>
            <ScrollTrack><ScrollThumb $height="83%" /></ScrollTrack>
          </DockBody>
        </Dock>

        <Splitter><Dots vertical /></Splitter>

        <ViewArea>
          <Tabs>
            <Tab $active>3D</Tab>
            <Tab>2D</Tab>
          </Tabs>
          <ViewTools>
            <ModeButton>3D</ModeButton>
            <ToolButton aria-label="Perspective"><FrameIcon /></ToolButton>
            <ToolButton $framed aria-label="Face"><FaceIcon /></ToolButton>
            <ToolButton $framed aria-label="Auto rotate"><AutoIcon /></ToolButton>
            <ToolButton aria-label="Snapshot"><CameraIcon /></ToolButton>
            <ToolButton $framed aria-label="Axes"><AxesIcon /></ToolButton>
            <ToolButton $framed aria-label="Red slice"><SmallPlane color="#f00" /></ToolButton>
            <ToolButton $framed aria-label="Green slice"><SmallPlane color="#00a050" /></ToolButton>
            <ToolButton $framed aria-label="Blue slice"><SmallPlane color="#00f" /></ToolButton>
            <ToolButton aria-label="Slices"><StripesIcon /></ToolButton>
            <ModeSelect>
              <SelectFrame><Select aria-label="Layout"><option>Auto</option></Select><Arrow /></SelectFrame>
            </ModeSelect>
          </ViewTools>
          <Viewport><Robot /></Viewport>
          <BottomHandle><Dots /></BottomHandle>
        </ViewArea>
      </Main>

      <StatusBar>
        <span>load volume data in DICOM format</span>
        <StatusMode>
          Normal Mode
          <svg width="15" height="15" aria-hidden="true">
            {[[12, 0], [8, 4], [12, 4], [4, 8], [8, 8], [12, 8], [0, 12], [4, 12], [8, 12], [12, 12]].map(([x, y]) => (
              <rect key={`${x}-${y}`} x={x} y={y} width="3" height="3" fill="#858585" />
            ))}
          </svg>
        </StatusMode>
      </StatusBar>
    </Window>
  );
}
